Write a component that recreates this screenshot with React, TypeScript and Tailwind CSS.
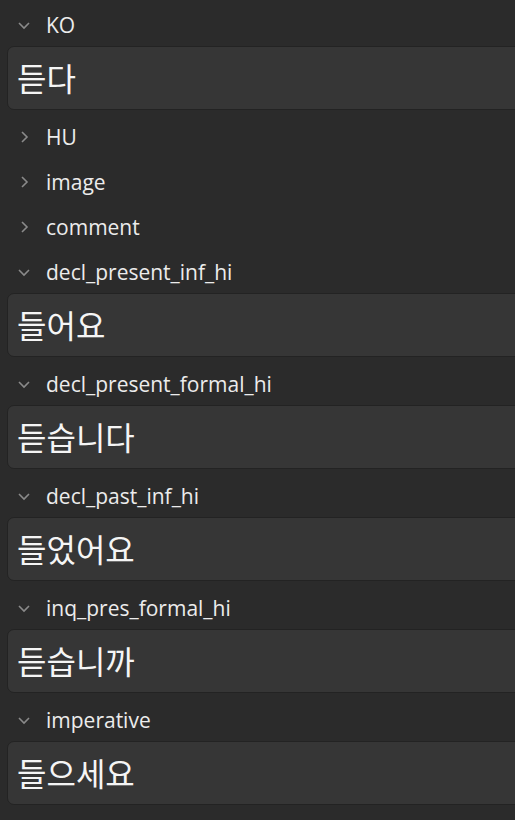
import React from "react";

type Field = { label: string; open: boolean; value?: string };

const FIELDS: Field[] = [
  { label: "KO", open: true, value: "듣다" },
  { label: "HU", open: false },
  { label: "image", open: false },
  { label: "comment", open: false },
  { label: "decl_present_inf_hi", open: true, value: "들어요" },
  { label: "decl_present_formal_hi", open: true, value: "듣습니다" },
  { label: "decl_past_inf_hi", open: true, value: "들었어요" },
  { label: "inq_pres_formal_hi", open: true, value: "듣습니까" },
  { label: "imperative", open: true, value: "들으세요" },
];

function Chevron({ open }: { open: boolean }) {
  return (
    <svg width="14" height="14" viewBox="0 0 14 14" className="text-[#8a8a8a]">
      {open ? (
        <path d="M2 5 L7 10 L12 5" fill="none" stroke="currentColor" strokeWidth="1.6" />
      ) : (
        <path d="M5 2 L10 7 L5 12" fill="none" stroke="currentColor" strokeWidth="1.6" />
      )}
    </svg>
  );
}

export default function App() {
  return (
    <div
      className="w-[515px] h-[820px] overflow-hidden bg-[#2b2b2b] pt-[4px]"
      style={{ fontFamily: '"Open Sans", "Noto Sans", sans-serif' }}
    >
      {FIELDS.map((f) => (
        <div key={f.label} className="flex flex-col pb-[3px]">
          <div className="h-[42px] flex items-center">
            <div className="w-[46px] flex justify-center pl-[1px]">
              <Chevron open={f.open} />
            </div>
            <span className="text-[21px] text-[#ececec] leading-none">{f.label}</span>
          </div>
          {f.open && (
            <div className="ml-[7px] w-[530px] h-[64px] mb-[3px] rounded-[7px] bg-[#363636] border border-[#232323] flex items-center pl-[9px] pb-[3px]">
              <span
                className="text-[32px] text-[#f5f5f5] leading-none"
                style={{ fontFamily: '"Noto Sans CJK KR", sans-serif' }}
              >
                {f.value}
              </span>
            </div>
          )}
        </div>
      ))}
    </div>
  );
}
